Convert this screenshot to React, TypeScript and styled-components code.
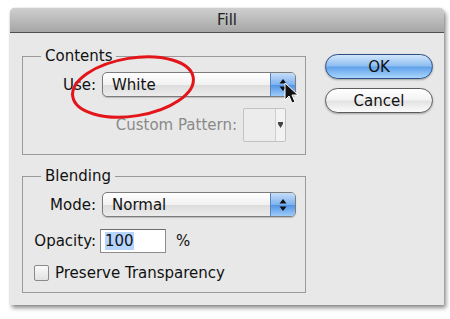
import styled, { createGlobalStyle } from 'styled-components';

const Global = createGlobalStyle`
  html, body {
    margin: 0;
    background: #ffffff;
  }
  body {
    font-family: "DejaVu Sans", "Liberation Sans", sans-serif;
    font-size: 15px;
    color: #111;
  }
`;

const Page = styled.div`
  padding: 8px 0 0 10px;
  width: 450px;
  height: 319px;
  box-sizing: border-box;
`;

const Window = styled.div`
  position: relative;
  width: 434px;
  height: 297px;
  background: #e8e8e8;
  border-radius: 5px 5px 0 0;
  box-shadow: 2px 3px 4px rgba(0, 0, 0, 0.45), 0 0 1px rgba(0, 0, 0, 0.4);
  display: flex;
  flex-direction: column;
`;

const TitleBar = styled.div`
  height: 24px;
  border-radius: 5px 5px 0 0;
  background: linear-gradient(#cfcfcf, #a6a6a6);
  border-bottom: 1px solid #505050;
  display: flex;
  align-items: center;
  justify-content: center;
  font-size: 15px;
  color: #222;
`;

const Body = styled.div`
  flex: 1;
  display: flex;
  padding: 14px 11px 0 12px;
  gap: 19px;
`;

const Column = styled.div`
  display: flex;
  flex-direction: column;
  gap: 12px;
  width: 284px;
`;

const Group = styled.fieldset<{ $h: number }>`
  margin: 0;
  height: ${(p) => p.$h}px;
  box-sizing: border-box;
  border: 1px solid #9a9a9a;
  padding: 0;
`;

const Legend = styled.legend`
  margin-left: 18px;
  padding: 0 4px;
  font-size: 15px;
  color: #111;
  line-height: 18px;
`;

const Row = styled.div<{ $top: number; $label: number }>`
  display: flex;
  align-items: center;
  margin-top: ${(p) => p.$top}px;
  padding-left: ${(p) => p.$label}px;
  gap: 6px;
`;

const Label = styled.span<{ $w?: number; $dim?: boolean }>`
  width: ${(p) => (p.$w ? `${p.$w}px` : 'auto')};
  text-align: right;
  color: ${(p) => (p.$dim ? '#8a8a8a' : '#111')};
  white-space: nowrap;
  line-height: 18px;
`;

const Select = styled.div`
  width: 194px;
  height: 25px;
  box-sizing: border-box;
  border: 1px solid #7c7c7c;
  border-radius: 5px;
  background: linear-gradient(#ffffff, #f1f1f1 50%, #dcdcdc 51%, #ececec);
  display: flex;
  align-items: center;
  overflow: hidden;
  box-shadow: 0 1px 1px rgba(0, 0, 0, 0.2);
`;

const SelectText = styled.span`
  flex: 1;
  padding-left: 9px;
  font-size: 15px;
  color: #111;
`;

const Stepper = styled.div`
  width: 24px;
  height: 100%;
  background: linear-gradient(#c5defa, #7fb3ef 50%, #4f92e6 51%, #9ecbf8);
  border-left: 1px solid #5c86bb;
  display: flex;
  align-items: center;
  justify-content: center;
`;

const Swatch = styled.div`
  width: 43px;
  height: 34px;
  box-sizing: border-box;
  border: 1px solid #c2c2c2;
  background: #ececec;
  border-radius: 2px;
  display: flex;
  justify-content: flex-end;
`;

const SwatchArrow = styled.div`
  width: 9px;
  border-left: 1px solid #cfcfcf;
  display: flex;
  align-items: center;
  justify-content: center;
  background: #f2f2f2;
`;

const Input = styled.div`
  width: 66px;
  height: 24px;
  box-sizing: border-box;
  border: 1px solid #8d8d8d;
  border-top-color: #6d6d6d;
  background: #fff;
  display: flex;
  align-items: center;
  padding-left: 4px;
  margin-left: -2px;
`;

const Selected = styled.span`
  background: #b5d5ff;
  color: #111;
  line-height: 18px;
`;

const Percent = styled.span`
  margin-left: 4px;
`;

const Check = styled.span`
  width: 15px;
  height: 16px;
  box-sizing: border-box;
  border: 1px solid #8a8a8a;
  border-radius: 2px;
  background: linear-gradient(#fafafa, #e2e2e2);
`;

const Buttons = styled.div`
  display: flex;
  flex-direction: column;
  gap: 9px;
  padding-top: 7px;
`;

const Button = styled.div<{ $primary?: boolean }>`
  width: 108px;
  height: 25px;
  box-sizing: border-box;
  border-radius: 13px;
  border: 1px solid ${(p) => (p.$primary ? '#2d4f86' : '#5c5c5c')};
  background: ${(p) =>
    p.$primary
      ? 'linear-gradient(#d2e6fb, #8dbdf0 48%, #5fa0ea 52%, #a9d6fb)'
      : 'linear-gradient(#ffffff, #f3f3f3 48%, #e2e2e2 52%, #fbfbfb)'};
  display: flex;
  align-items: center;
  justify-content: center;
  font-size: 15px;
  color: #111;
  box-shadow: 0 1px 2px rgba(0, 0, 0, 0.3);
`;

const Overlay = styled.svg`
  position: absolute;
  left: 0;
  top: 0;
  width: 100%;
  height: 100%;
  pointer-events: none;
`;

const Arrows = () => (
  <svg width="8" height="14" viewBox="0 0 8 14">
    <path d="M4 1 L7.5 5.5 H0.5 Z" fill="#111" />
    <path d="M4 13 L7.5 8.5 H0.5 Z" fill="#111" />
  </svg>
);

export default function App() {
  return (
    <Page>
      <Global />
      <Window>
        <TitleBar>Fill</TitleBar>
        <Body>
          <Column>
            <Group $h={108}>
              <Legend>Contents</Legend>
              <Row $top={7} $label={0}>
                <Label $w={73}>Use:</Label>
                <Select>
                  <SelectText>White</SelectText>
                  <Stepper>
                    <Arrows />
                  </Stepper>
                </Select>
              </Row>
              <Row $top={11} $label={0}>
                <Label $w={214} $dim>
                  Custom Pattern:
                </Label>
                <Swatch>
                  <SwatchArrow>
                    <svg width="5" height="6" viewBox="0 0 5 6">
                      <path d="M0 0 H5 V2 L2.5 6 L0 2 Z" fill="#444" />
                    </svg>
                  </SwatchArrow>
                </Swatch>
              </Row>
            </Group>
            <Group $h={126}>
              <Legend>Blending</Legend>
              <Row $top={7} $label={0}>
                <Label $w={73}>Mode:</Label>
                <Select>
                  <SelectText>Normal</SelectText>
                  <Stepper>
                    <Arrows />
                  </Stepper>
                </Select>
              </Row>
              <Row $top={12} $label={0}>
                <Label $w={73}>Opacity:</Label>
                <Input>
                  <Selected>100</Selected>
                </Input>
                <Percent>%</Percent>
              </Row>
              <Row $top={11} $label={11}>
                <Check />
                <Label>Preserve Transparency</Label>
              </Row>
            </Group>
          </Column>
          <Buttons>
            <Button $primary>OK</Button>
            <Button>Cancel</Button>
          </Buttons>
        </Body>
        <Overlay viewBox="0 0 434 297">
          <ellipse
            cx="123"
            cy="79"
            rx="61"
            ry="29"
            fill="none"
            stroke="#e3151b"
            strokeWidth="3"
            transform="rotate(-9 123 79)"
          />
          <path
            d="M275 75 L275 92 L279 88 L282 95 L285 94 L282 87 L288 87 Z"
            fill="#111"
            stroke="#fff"
            strokeWidth="1"
            strokeLinejoin="round"
          />
        </Overlay>
      </Window>
    </Page>
  );
}
